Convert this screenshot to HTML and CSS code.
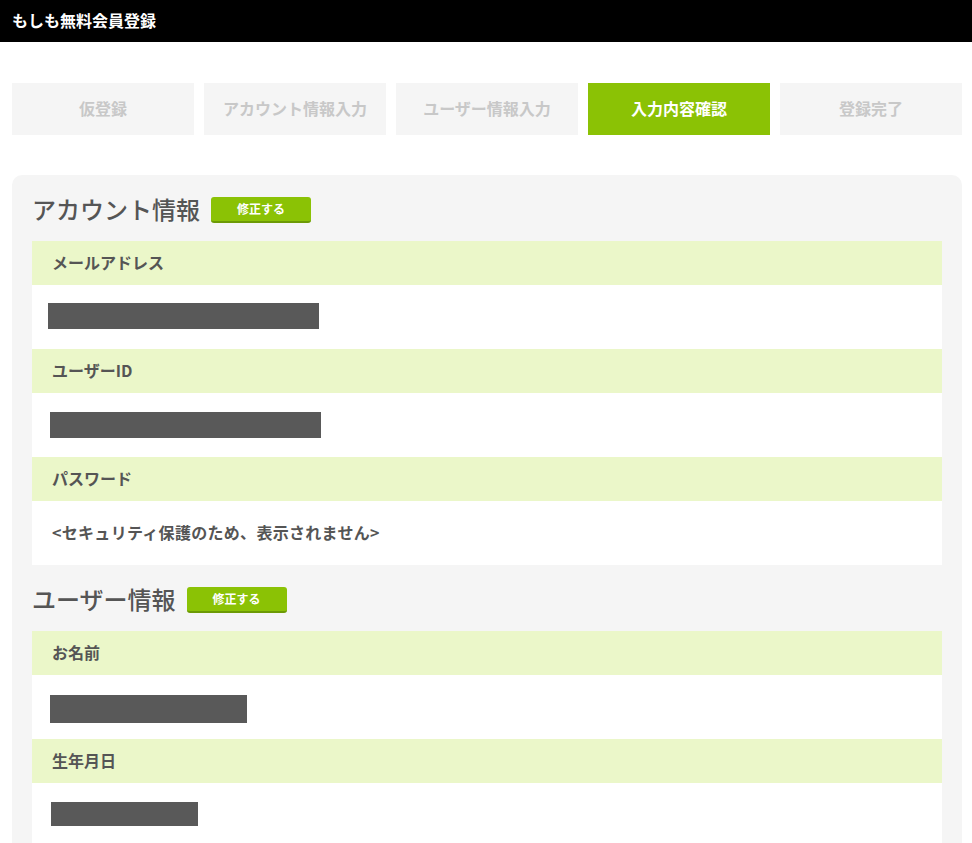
FILE: index.html
```html
<!DOCTYPE html>
<html lang="ja">
<head>
<meta charset="utf-8">
<title>もしも無料会員登録</title>
<link rel="stylesheet" href="styles.css">
</head>
<body>
<header class="topbar">
  <h1 class="topbar-title">もしも無料会員登録</h1>
</header>
<main class="page">
  <ol class="steps">
    <li class="step">仮登録</li>
    <li class="step">アカウント情報入力</li>
    <li class="step">ユーザー情報入力</li>
    <li class="step step-active">入力内容確認</li>
    <li class="step">登録完了</li>
  </ol>
  <section class="card">
    <div class="section-head">
      <h2 class="section-title">アカウント情報</h2>
      <a class="edit-btn" href="#">修正する</a>
    </div>
    <dl class="fields">
      <dt class="field-label">メールアドレス</dt>
      <dd class="field-value"><span class="mask mask-mail"></span></dd>
      <dt class="field-label">ユーザーID</dt>
      <dd class="field-value"><span class="mask mask-id"></span></dd>
      <dt class="field-label">パスワード</dt>
      <dd class="field-value field-text">&lt;セキュリティ保護のため、表示されません&gt;</dd>
    </dl>
    <div class="section-head">
      <h2 class="section-title">ユーザー情報</h2>
      <a class="edit-btn" href="#">修正する</a>
    </div>
    <dl class="fields">
      <dt class="field-label">お名前</dt>
      <dd class="field-value"><span class="mask mask-name"></span></dd>
      <dt class="field-label">生年月日</dt>
      <dd class="field-value"><span class="mask mask-birth"></span></dd>
    </dl>
  </section>
</main>
</body>
</html>
```
FILE: styles.css
```css
* { box-sizing: border-box; }
html, body { margin: 0; padding: 0; }
body {
  background: #fff;
  color: #555;
  font-family: "Noto Sans CJK JP", "Noto Sans", sans-serif;
}
.topbar {
  background: #000;
  height: 42px;
  display: flex;
  align-items: center;
  padding-left: 12px;
  padding-bottom: 2px;
}
.topbar-title {
  margin: 0;
  color: #fff;
  font-size: 16px;
  font-weight: 700;
  line-height: 1;
}
.page {
  padding: 41px 10px 0 12px;
}
.steps {
  list-style: none;
  margin: 0;
  padding: 0;
  display: grid;
  grid-template-columns: repeat(5, 1fr);
  gap: 10px;
}
.step {
  height: 52px;
  background: #f5f5f5;
  color: #c8c8c8;
  font-size: 16px;
  font-weight: 700;
  display: flex;
  align-items: center;
  justify-content: center;
  padding-bottom: 3px;
}
.step-active {
  background: #8bc205;
  color: #fff;
}
.card {
  margin-top: 40px;
  background: #f5f5f5;
  border-radius: 10px 10px 0 0;
  padding: 0 20px 20px;
}
.section-head {
  display: flex;
  align-items: center;
  height: 66px;
  padding-top: 4px;
}
.section-title {
  margin: 0;
  font-size: 24px;
  font-weight: 500;
  color: #555;
  line-height: 1;
  padding-bottom: 2px;
}
.edit-btn {
  margin-left: 11px;
  width: 100px;
  height: 26px;
  background: #8bc205;
  border-bottom: 2px solid #6c9a05;
  border-radius: 3px;
  color: #fff;
  font-size: 12px;
  font-weight: 700;
  text-decoration: none;
  display: flex;
  align-items: center;
  justify-content: center;
  padding-bottom: 1px;
}
.fields {
  margin: 0;
}
.field-label {
  height: 44px;
  background: #ebf7c9;
  padding-left: 20px;
  padding-bottom: 3px;
  display: flex;
  align-items: center;
  font-size: 16px;
  font-weight: 700;
  color: #555;
}
.field-value {
  margin: 0;
  height: 64px;
  background: #fff;
  padding-left: 20px;
  display: flex;
  align-items: center;
}
.field-text {
  font-size: 16px;
  font-weight: 700;
  color: #555;
  padding-bottom: 3px;
  letter-spacing: 0.3px;
}
.mask {
  display: block;
  background: #595959;
}
.mask-mail { width: 271px; height: 26px; margin-left: -4px; margin-top: -2px; }
.mask-id { width: 271px; height: 26px; margin-left: -2px; }
.mask-name { width: 197px; height: 28px; margin-left: -2px; margin-top: 4px; }
.mask-birth { width: 147px; height: 24px; margin-left: -1px; margin-top: -2px; }
```
